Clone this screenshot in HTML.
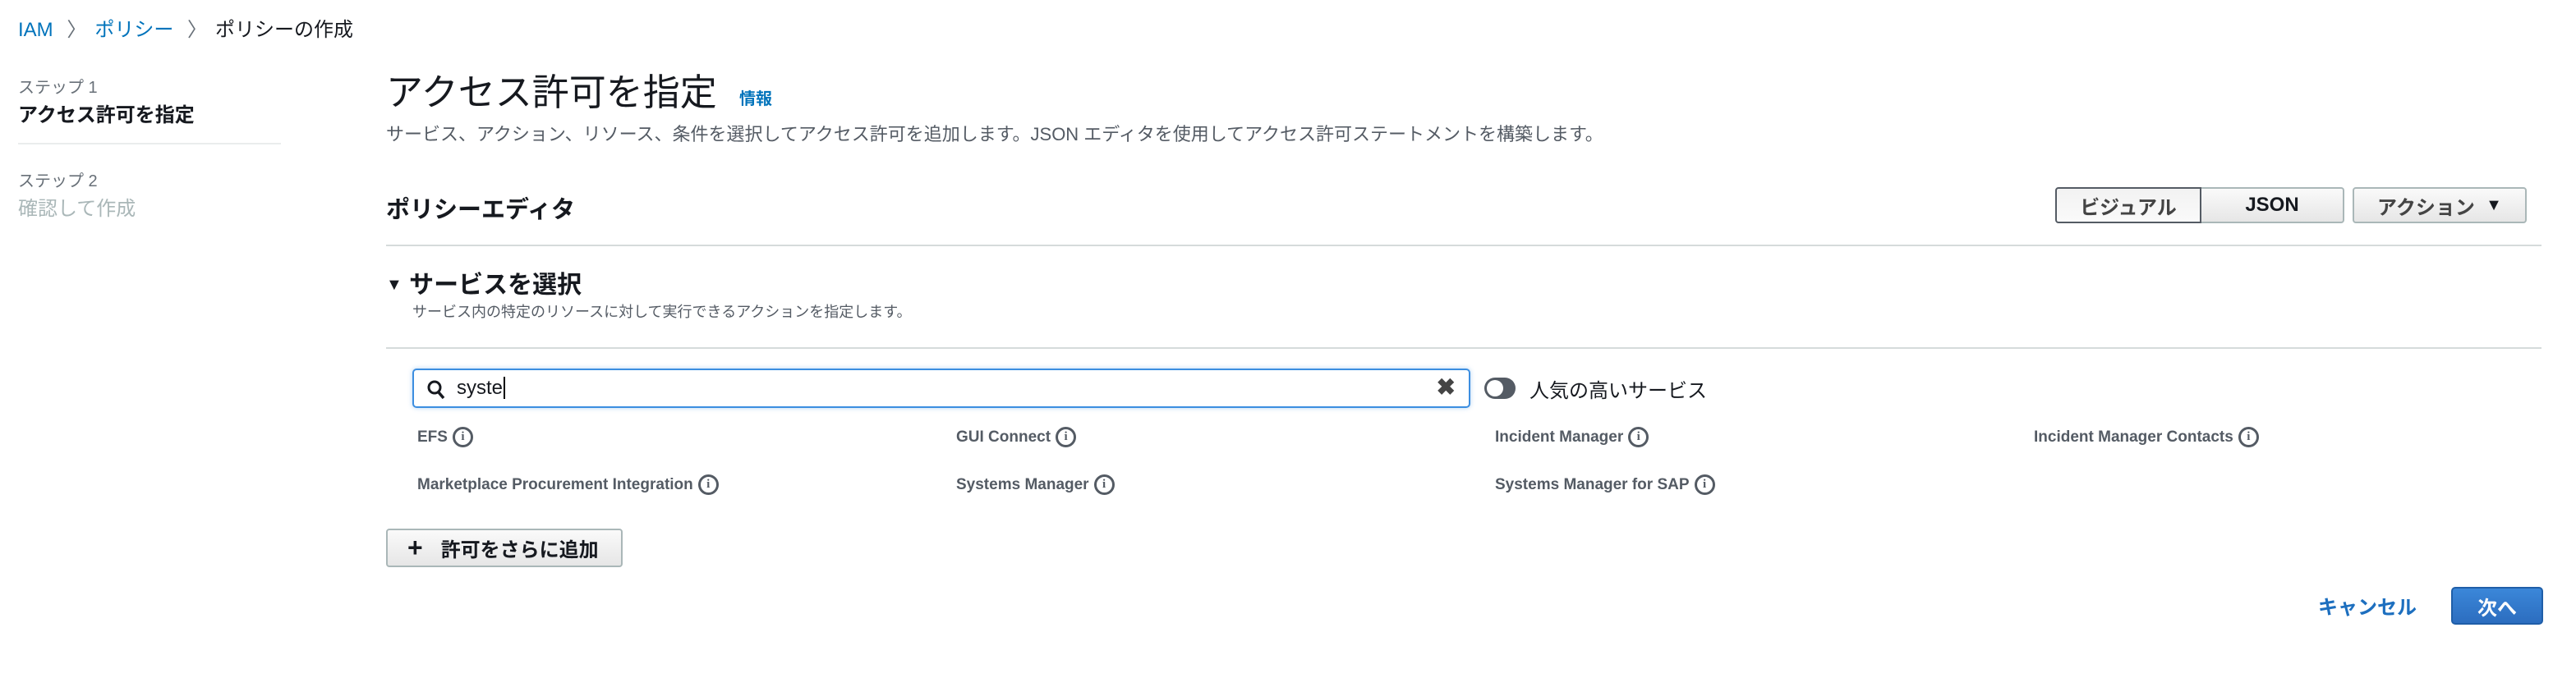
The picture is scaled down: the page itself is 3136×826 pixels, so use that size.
<!DOCTYPE html>
<html><head><meta charset="utf-8"><style>
*{margin:0;padding:0;box-sizing:border-box}
body{width:3136px;height:826px;background:#fff;font-family:"Liberation Sans","Noto Sans CJK JP",sans-serif;color:#16191f;position:relative;overflow:hidden}
.a{position:absolute;white-space:nowrap}
.blue{color:#0073bb}
.btn{position:absolute;border:2px solid #aab7b8;border-radius:4px;background:linear-gradient(#fafafa,#e6e6e6);font-weight:bold;font-size:24px;color:#444;display:flex;align-items:center;justify-content:center}
.svc{position:absolute;font-size:19px;font-weight:bold;color:#545b64;display:flex;align-items:center;gap:6px;white-space:nowrap}
.i{width:25px;height:25px;border:3px solid #545b64;border-radius:50%;font-size:15px;line-height:19px;text-align:center;font-family:"Liberation Serif",serif;font-weight:bold;color:#545b64}
.hr{position:absolute;height:2px;background:#d5dbdb}
</style></head><body>
<div class="a" style="left:22px;top:16px;font-size:24px"><span class="blue">IAM</span> <span style="color:#687078;margin:0 10px">〉</span><span class="blue">ポリシー</span> <span style="color:#687078;margin:0 10px">〉</span><span style="color:#16191f">ポリシーの作成</span></div>

<div class="a" style="left:22px;top:90px;font-size:20px;color:#687078">ステップ 1</div>
<div class="a" style="left:22px;top:120px;font-size:24px;font-weight:bold">アクセス許可を指定</div>
<div class="hr" style="left:22px;top:174px;width:320px;background:#eaeded"></div>
<div class="a" style="left:22px;top:204px;font-size:20px;color:#687078">ステップ 2</div>
<div class="a" style="left:22px;top:234px;font-size:24px;color:#aab7b8">確認して作成</div>

<div class="a" style="left:470px;top:76px;font-size:45px;color:#16191f">アクセス許可を指定</div>
<div class="a blue" style="left:900px;top:104px;font-size:20px;font-weight:bold">情報</div>
<div class="a" style="left:470px;top:146px;font-size:22px;color:#545b64">サービス、アクション、リソース、条件を選択してアクセス許可を追加します。JSON エディタを使用してアクセス許可ステートメントを構築します。</div>

<div class="a" style="left:470px;top:232px;font-size:29px;font-weight:bold">ポリシーエディタ</div>
<div class="btn" style="left:2502px;top:228px;width:178px;height:44px;background:linear-gradient(#f2f2f2,#fafafa);border-color:#545b64;border-radius:4px 0 0 4px">ビジュアル</div>
<div class="btn" style="left:2680px;top:228px;width:174px;height:44px;border-radius:0 4px 4px 0;border-left:none;color:#16191f">JSON</div>
<div class="btn" style="left:2864px;top:228px;width:212px;height:44px">アクション&nbsp;&nbsp;<span style="font-size:20px;color:#16191f">▼</span></div>
<div class="hr" style="left:470px;top:298px;width:2624px"></div>

<div class="a" style="left:470px;top:322px;font-size:30px;font-weight:bold"><span style="font-size:20px;position:relative;top:-4px">▼</span> サービスを選択</div>
<div class="a" style="left:502px;top:366px;font-size:18px;color:#545b64">サービス内の特定のリソースに対して実行できるアクションを指定します。</div>
<div class="hr" style="left:470px;top:423px;width:2624px"></div>

<div class="a" style="left:502px;top:449px;width:1288px;height:48px;border:2px solid #3c8ee0;border-radius:5px;box-shadow:0 0 6px rgba(60,142,224,.4)">
<svg style="position:absolute;left:16px;top:12px" width="22" height="24" viewBox="0 0 22 24"><circle cx="9" cy="9" r="7" fill="none" stroke="#16191f" stroke-width="3"/><path d="M14 15 L20 22" stroke="#16191f" stroke-width="3.5"/></svg>
<span style="position:absolute;left:52px;top:8px;font-size:24px">syste<span style="border-left:2px solid #000;margin-left:1px"></span></span>
<span style="position:absolute;right:16px;top:4px;font-size:28px;font-weight:bold;color:#444">✖</span>
</div>
<div class="a" style="left:1807px;top:460px;width:38px;height:26px;border-radius:13px;background:#545b64"><div style="position:absolute;left:3px;top:3px;width:20px;height:20px;border-radius:50%;background:#fff"></div></div>
<div class="a" style="left:1862px;top:456px;font-size:24px;color:#16191f">人気の高いサービス</div>

<div class="svc" style="left:508px;top:520px">EFS <span class="i">i</span></div>
<div class="svc" style="left:1164px;top:520px">GUI Connect <span class="i">i</span></div>
<div class="svc" style="left:1820px;top:520px">Incident Manager <span class="i">i</span></div>
<div class="svc" style="left:2476px;top:520px">Incident Manager Contacts <span class="i">i</span></div>
<div class="svc" style="left:508px;top:578px">Marketplace Procurement Integration <span class="i">i</span></div>
<div class="svc" style="left:1164px;top:578px">Systems Manager <span class="i">i</span></div>
<div class="svc" style="left:1820px;top:578px">Systems Manager for SAP <span class="i">i</span></div>

<div class="btn" style="left:470px;top:644px;width:288px;height:47px;color:#16191f;justify-content:flex-start;padding-left:24px"><span style="font-size:32px;margin-right:22px">+</span>許可をさらに追加</div>

<div class="a" style="left:2822px;top:720px;font-size:24px;font-weight:bold;color:#1d6fbf">キャンセル</div>
<div class="a" style="left:2984px;top:715px;width:112px;height:46px;border-radius:5px;background:linear-gradient(#3b87d9,#2c6dbf);border:2px solid #1f5ea8;color:#fff;font-size:24px;font-weight:bold;display:flex;align-items:center;justify-content:center">次へ</div>
</body></html>
